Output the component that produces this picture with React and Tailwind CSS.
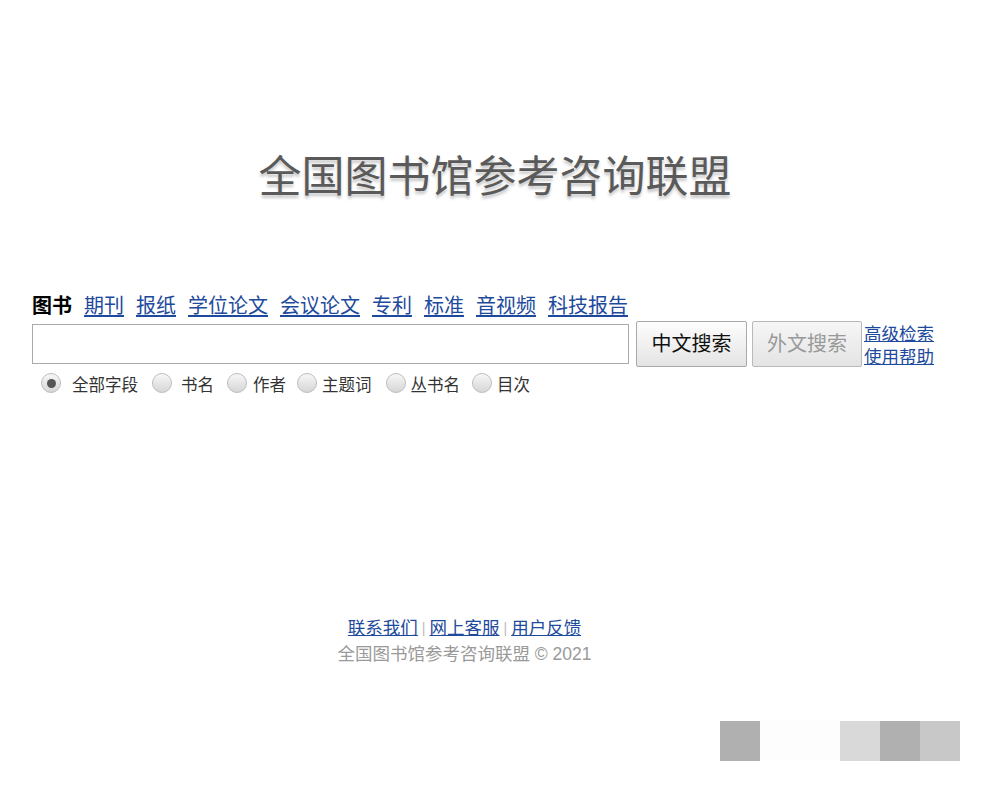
import React, { useState } from 'react';

const tabs = ['期刊', '报纸', '学位论文', '会议论文', '专利', '标准', '音视频', '科技报告'];
const fields = [
    { label: '全部字段', space: 'ml-[11px] mr-[14px]' },
    { label: '书名', space: 'ml-[9px] mr-[13px]' },
    { label: '作者', space: 'ml-[6px] mr-[11px]' },
    { label: '主题词', space: 'ml-[5px] mr-[14px]' },
    { label: '丛书名', space: 'ml-[5px] mr-[12px]' },
    { label: '目次', space: 'ml-[5px] mr-0' },
];

const Radio = ({ checked, label, space, onClick }) => (
    <label className="flex items-center cursor-pointer" onClick={onClick}>
        <span className="w-[20px] h-[20px] mt-[-4px] rounded-full border border-[#bdbdbd] bg-gradient-to-b from-[#f7f7f7] to-[#d6d6d6] flex items-center justify-center">
            {checked && <span className="w-[9px] h-[9px] rounded-full bg-[#555]" />}
        </span>
        <span className={`${space} text-[16.5px] text-[#333]`}>{label}</span>
    </label>
);

export default function App() {
    const [field, setField] = useState(0);

    return (
        <div className="w-[998px] h-[789px] bg-white flex flex-col" style={{ fontFamily: '"Liberation Sans", "Noto Sans CJK SC", sans-serif' }}>
            {/* Logo */}
            <div className="pt-[150px] flex justify-center">
                <h1 className="mr-[8px] text-[43px] leading-[54px] text-[#5a5a5a] font-normal [text-shadow:0_3px_3px_rgba(0,0,0,0.22)]">
                    全国图书馆参考咨询联盟
                </h1>
            </div>

            {/* Search */}
            <div className="mt-[88px] ml-[32px]">
                <div className="flex items-end text-[20px] leading-[28px] gap-[12px]">
                    <span className="font-bold text-black">图书</span>
                    {tabs.map(t => (
                        <a key={t} href="#" className="text-[#1d4a9c] underline underline-offset-2">{t}</a>
                    ))}
                </div>
                <div className="flex items-center mt-[-2px]">
                    <input className="w-[597px] h-[40px] border border-[#aaa] outline-none px-2 text-[16px]" />
                    <button className="ml-[7px] w-[111px] h-[46px] border border-[#a9a9a9] rounded-[2px] bg-gradient-to-b from-[#fdfdfd] to-[#e4e4e4] text-[20px] text-[#111]">中文搜索</button>
                    <button className="ml-[5px] w-[110px] h-[46px] border border-[#b9b9b9] rounded-[2px] bg-gradient-to-b from-[#f6f6f6] to-[#e4e4e4] text-[20px] text-[#999]">外文搜索</button>
                    <div className="ml-[2px] mt-[5px] flex flex-col text-[17.5px] leading-[23px]">
                        <a href="#" className="text-[#1d4a9c] underline">高级检索</a>
                        <a href="#" className="text-[#1d4a9c] underline">使用帮助</a>
                    </div>
                </div>
                <div className="flex items-center mt-[3px] ml-[9px] h-[26px]">
                    {fields.map((f, i) => (
                        <Radio key={f.label} label={f.label} space={f.space} checked={field === i} onClick={() => setField(i)} />
                    ))}
                </div>
            </div>

            {/* Footer */}
            <div className="mt-[217px] flex flex-col items-center text-[17.5px] leading-[26px] pr-[69px]">
                <div className="flex items-center">
                    <a href="#" className="text-[#1d4a9c] underline">联系我们</a>
                    <span className="mx-[4px] text-[#bbb] text-[14px]">|</span>
                    <a href="#" className="text-[#1d4a9c] underline">网上客服</a>
                    <span className="mx-[4px] text-[#bbb] text-[14px]">|</span>
                    <a href="#" className="text-[#1d4a9c] underline">用户反馈</a>
                </div>
                <div className="text-[#9a9a9a]">全国图书馆参考咨询联盟 © 2021</div>
            </div>

            {/* Tile strip */}
            <div className="mt-[54px] ml-[720px] flex">
                <div className="w-[40px] h-[40px] bg-[#b0b0b0]" />
                <div className="w-[80px] h-[40px] bg-[#fdfdfd]" />
                <div className="w-[40px] h-[40px] bg-[#d9d9d9]" />
                <div className="w-[40px] h-[40px] bg-[#b0b0b0]" />
                <div className="w-[40px] h-[40px] bg-[#c8c8c8]" />
            </div>
        </div>
    );
}
